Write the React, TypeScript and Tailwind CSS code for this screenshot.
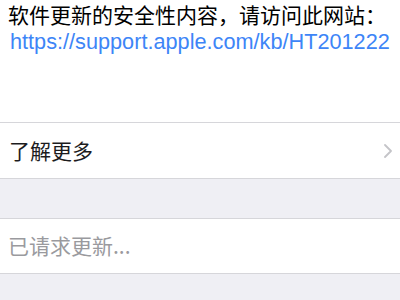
export default function App() {
  const font = { fontFamily: '"Noto Sans CJK SC", "Liberation Sans", sans-serif' }
  return (
    <div className="w-[400px] h-[300px] overflow-hidden bg-[#efeff4]" style={font}>
      {/* description block */}
      <div className="bg-white h-[122px] pl-[8px]">
        <p className="text-[21px] leading-[28px] text-black whitespace-nowrap">
          软件更新的安全性内容，请访问此网站：
        </p>
        <p
          className="text-[21.7px] leading-[27px] text-[#3d85f7] whitespace-nowrap pl-[2px]"
          style={{ fontFamily: '"Liberation Sans", sans-serif' }}
        >
          https://support.apple.com/kb/HT201222
        </p>
      </div>

      {/* learn more row */}
      <div className="bg-white border-y border-[#d6d6da] h-[57px] flex items-center justify-between pl-[9px] pr-[8px]">
        <span className="text-[21px] text-[#1c1c1e]">了解更多</span>
        <svg width="8" height="14" viewBox="0 0 8 14" fill="none">
          <path d="M1 1l6 6-6 6" stroke="#c4c4c8" strokeWidth="1.8" strokeLinecap="round" strokeLinejoin="round" />
        </svg>
      </div>

      <div className="h-[39px]" />

      {/* status row */}
      <div className="bg-white border-y border-[#d6d6da] h-[56px] flex items-center pl-[8px]">
        <span className="text-[21px] text-[#9a9a9e]">已请求更新...</span>
      </div>
    </div>
  )
}
